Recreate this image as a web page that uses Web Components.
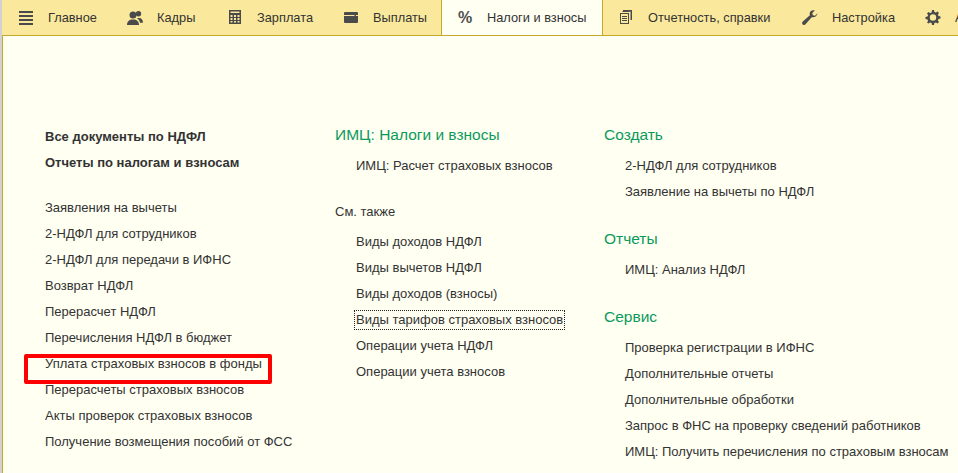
<!DOCTYPE html>
<html>
<head>
<meta charset="utf-8">
<style>
html, body { margin: 0; height: 100%; overflow: hidden; background: #fffff2; }
body { box-sizing: border-box; border-left: 2px solid #d2d2d0; font: 13px/16px Arial, "Liberation Sans", sans-serif; color: #333; }
</style>
</head>
<body>
<section-bar></section-bar>
<section-page>
  <nav-col style="width:290px">
    <nav-link strong>Все документы по НДФЛ</nav-link>
    <nav-link strong>Отчеты по налогам и взносам</nav-link>
    <nav-gap h="19"></nav-gap>
    <nav-link>Заявления на вычеты</nav-link>
    <nav-link>2-НДФЛ для сотрудников</nav-link>
    <nav-link>2-НДФЛ для передачи в ИФНС</nav-link>
    <nav-link>Возврат НДФЛ</nav-link>
    <nav-link>Перерасчет НДФЛ</nav-link>
    <nav-link>Перечисления НДФЛ в бюджет</nav-link>
    <nav-link marked>Уплата страховых взносов в фонды</nav-link>
    <nav-link>Перерасчеты страховых взносов</nav-link>
    <nav-link>Акты проверок страховых взносов</nav-link>
    <nav-link>Получение возмещения пособий от ФСС</nav-link>
  </nav-col>
  <nav-col style="width:269px">
    <nav-head>ИМЦ: Налоги и взносы</nav-head>
    <nav-link sub>ИМЦ: Расчет страховых взносов</nav-link>
    <nav-gap h="20"></nav-gap>
    <nav-link>См. также</nav-link>
    <nav-gap h="4"></nav-gap>
    <nav-link sub>Виды доходов НДФЛ</nav-link>
    <nav-link sub>Виды вычетов НДФЛ</nav-link>
    <nav-link sub>Виды доходов (взносы)</nav-link>
    <nav-link sub focused>Виды тарифов страховых взносов</nav-link>
    <nav-link sub>Операции учета НДФЛ</nav-link>
    <nav-link sub>Операции учета взносов</nav-link>
  </nav-col>
  <nav-col>
    <nav-head>Создать</nav-head>
    <nav-link sub>2-НДФЛ для сотрудников</nav-link>
    <nav-link sub>Заявление на вычеты по НДФЛ</nav-link>
    <nav-gap h="23"></nav-gap>
    <nav-head>Отчеты</nav-head>
    <nav-link sub>ИМЦ: Анализ НДФЛ</nav-link>
    <nav-gap h="23"></nav-gap>
    <nav-head>Сервис</nav-head>
    <nav-link sub>Проверка регистрации в ИФНС</nav-link>
    <nav-link sub>Дополнительные отчеты</nav-link>
    <nav-link sub>Дополнительные обработки</nav-link>
    <nav-link sub>Запрос в ФНС на проверку сведений работников</nav-link>
    <nav-link sub>ИМЦ: Получить перечисления по страховым взносам</nav-link>
  </nav-col>
</section-page>
<script>
const icons = {
  menu: '<path d="M1 1h14v2H1zM1 5h14v2H1zM1 9h14v2H1zM1 13h14v2H1z"/>',
  people: '<circle cx="6" cy="5" r="3.500"/><path d="M0 15c0-3.500 2.200-5.500 6-5.500s6 2 6 5.500z"/><circle cx="11.500" cy="3.800" r="2.700"/><path d="M10 8.500c3.500-1.500 6 .8 6 4.200h-3c-.2-1.800-1.200-3.200-3-4.200z"/>',
  calc: '<path fill-rule="evenodd" d="M2 0h12v14H2zM3.500 1.500V3h9V1.500zM3.500 5v2h2V5zM7 5v2h2V5zM10.500 5v2h2V5zM3.500 8v2h2V8zM7 8v2h2V8zM10.500 8v2h2V8zM3.500 11v1.500h2V11zM7 11v1.500h2V11zM10.500 11v1.500h2V11z"/>',
  wallet: '<path fill-rule="evenodd" d="M2 2h12a1 1 0 0 1 1 1v9a1 1 0 0 1-1 1H2a1 1 0 0 1-1-1V3a1 1 0 0 1 1-1zM1 5v1h10.500V5zM13 5v1h2V5z"/>',
  docs: '<path fill-rule="evenodd" d="M2 3h9v11H2zM3 4v9h7V4zM4 6h5v1H4zM4 8h5v1H4zM4 10h5v1H4z"/><path d="M5 0h9v10h-1.500V1.500H5zM4 1.500h7.500V2H4z"/>',
  wrench: '<path d="M15.500 3.200 13 5.700l-2.200-.5-.5-2.200L12.800.5C10.500-.4 8 .9 7.700 3.300c-.1.700 0 1.400.2 2L.8 11.500c-.9.800-.9 2.100-.1 2.900.8.800 2.100.7 2.800-.2l6.200-7c2.700.7 5.500-1.400 5.800-4z"/>',
  gear: '<path fill-rule="evenodd" d="M7 0h2l.4 2 1.500.6 1.700-1.100 1.400 1.400-1.100 1.700.6 1.500 2 .4v2l-2 .4-.6 1.500 1.100 1.700-1.400 1.400-1.700-1.100-1.500.6-.4 2H7l-.4-2-1.500-.6-1.700 1.100L2 12.600l1.100-1.700-.6-1.500-2-.4V7l2-.4.6-1.500L2 3.400 3.400 2l1.700 1.100 1.500-.6zM8 4.300a3.200 3.200 0 1 0 0 6.400 3.200 3.200 0 0 0 0-6.400z"/>'
}

// label widths are fixed, the reference font runs a bit narrower per word
const tabs = [
  ['menu', 'Главное', 48],
  ['people', 'Кадры', 39],
  ['calc', 'Зарплата', 55],
  ['wallet', 'Выплаты', 53],
  ['%', 'Налоги и взносы', 100],
  ['docs', 'Отчетность, справки', 123],
  ['wrench', 'Настройка', 62],
  ['gear', 'Администрирование', 130]
]

class SectionBar extends HTMLElement {
  constructor () {
    super()
    const tabHtml = tabs.map(([icon, label, width]) => {
      const glyph = icon === '%'
        ? '<span class="pct">%</span>'
        : `<svg viewBox="0 0 16 16" width="16" height="16" fill="#4a4a4a">${icons[icon]}</svg>`
      return `<div class="tab${icon === '%' ? ' on' : ''}">
        <span class="ico">${glyph}</span><span class="lbl" style="width:${width}px">${label}</span></div>`
    }).join('')
    this.attachShadow({ mode: 'open' }).innerHTML = `
      <style>
      :host { display: flex; height: 35px; background: #fae99c; border-bottom: 1px solid #c4a92c; padding-left: 1px; overflow: hidden; }
      .tab { display: flex; align-items: center; flex: none; height: 35px; padding: 1px 15px 0; box-sizing: border-box; border-right: 1px solid transparent; color: #333; font-size: 13px; white-space: nowrap; }
      .ico { width: 30px; flex: none; display: flex; align-items: center; }
      .lbl { flex: none; display: block; font-size: 12.800px; }
      .tab:has(+ .on) { border-right-color: #c4a92c; }
      .on { background: #fffff2; border-right-color: #c4a92c; height: 36px; padding-bottom: 1px; }
      .pct { font: bold 16px Arial, "Liberation Sans", sans-serif; color: #4f4f4f; margin-left: 1px; }
      </style>${tabHtml}`
  }
}

class SectionPage extends HTMLElement {
  constructor () {
    super()
    this.attachShadow({ mode: 'open' }).innerHTML = `
      <style>
      :host { display: flex; height: 437px; box-sizing: border-box; padding: 88px 0 0 42px; border-left: 1px solid #c4a92c; }
      </style><slot></slot>`
  }
}

class NavCol extends HTMLElement {
  constructor () {
    super()
    this.attachShadow({ mode: 'open' }).innerHTML = `
      <style>:host { display: block; flex: none; }</style><slot></slot>`
  }
}

class NavLink extends HTMLElement {
  constructor () {
    super()
    this.attachShadow({ mode: 'open' }).innerHTML = `
      <style>
      :host { display: block; height: 26px; line-height: 26px; font-size: 13px; color: #333; white-space: nowrap; position: relative; }
      :host([strong]) { font-weight: bold; }
      :host([sub]) { padding-left: 21px; }
      .t { display: inline-block; line-height: 16px; }
      :host([focused]) .t { outline: 1px dotted #222; outline-offset: 1px; }
      .mark { position: absolute; left: -21px; top: 3px; width: 240px; height: 22px; border: 4px solid #f00; border-radius: 2px; display: none; }
      :host([marked]) .mark { display: block; }
      </style><span class="t"><slot></slot></span><span class="mark"></span>`
  }
}

class NavHead extends HTMLElement {
  constructor () {
    super()
    this.attachShadow({ mode: 'open' }).innerHTML = `
      <style>:host { display: block; height: 22px; line-height: 22px; margin-bottom: 7px; font-size: 15.500px; color: #0a9a5c; white-space: nowrap; }</style><slot></slot>`
  }
}

class NavGap extends HTMLElement {
  constructor () {
    super()
    this.attachShadow({ mode: 'open' }).innerHTML = `<style>:host { display: block; height: ${this.getAttribute('h') || 0}px; }</style>`
  }
}

customElements.define('section-bar', SectionBar)
customElements.define('section-page', SectionPage)
customElements.define('nav-col', NavCol)
customElements.define('nav-link', NavLink)
customElements.define('nav-head', NavHead)
customElements.define('nav-gap', NavGap)
</script>
</body>
</html>
